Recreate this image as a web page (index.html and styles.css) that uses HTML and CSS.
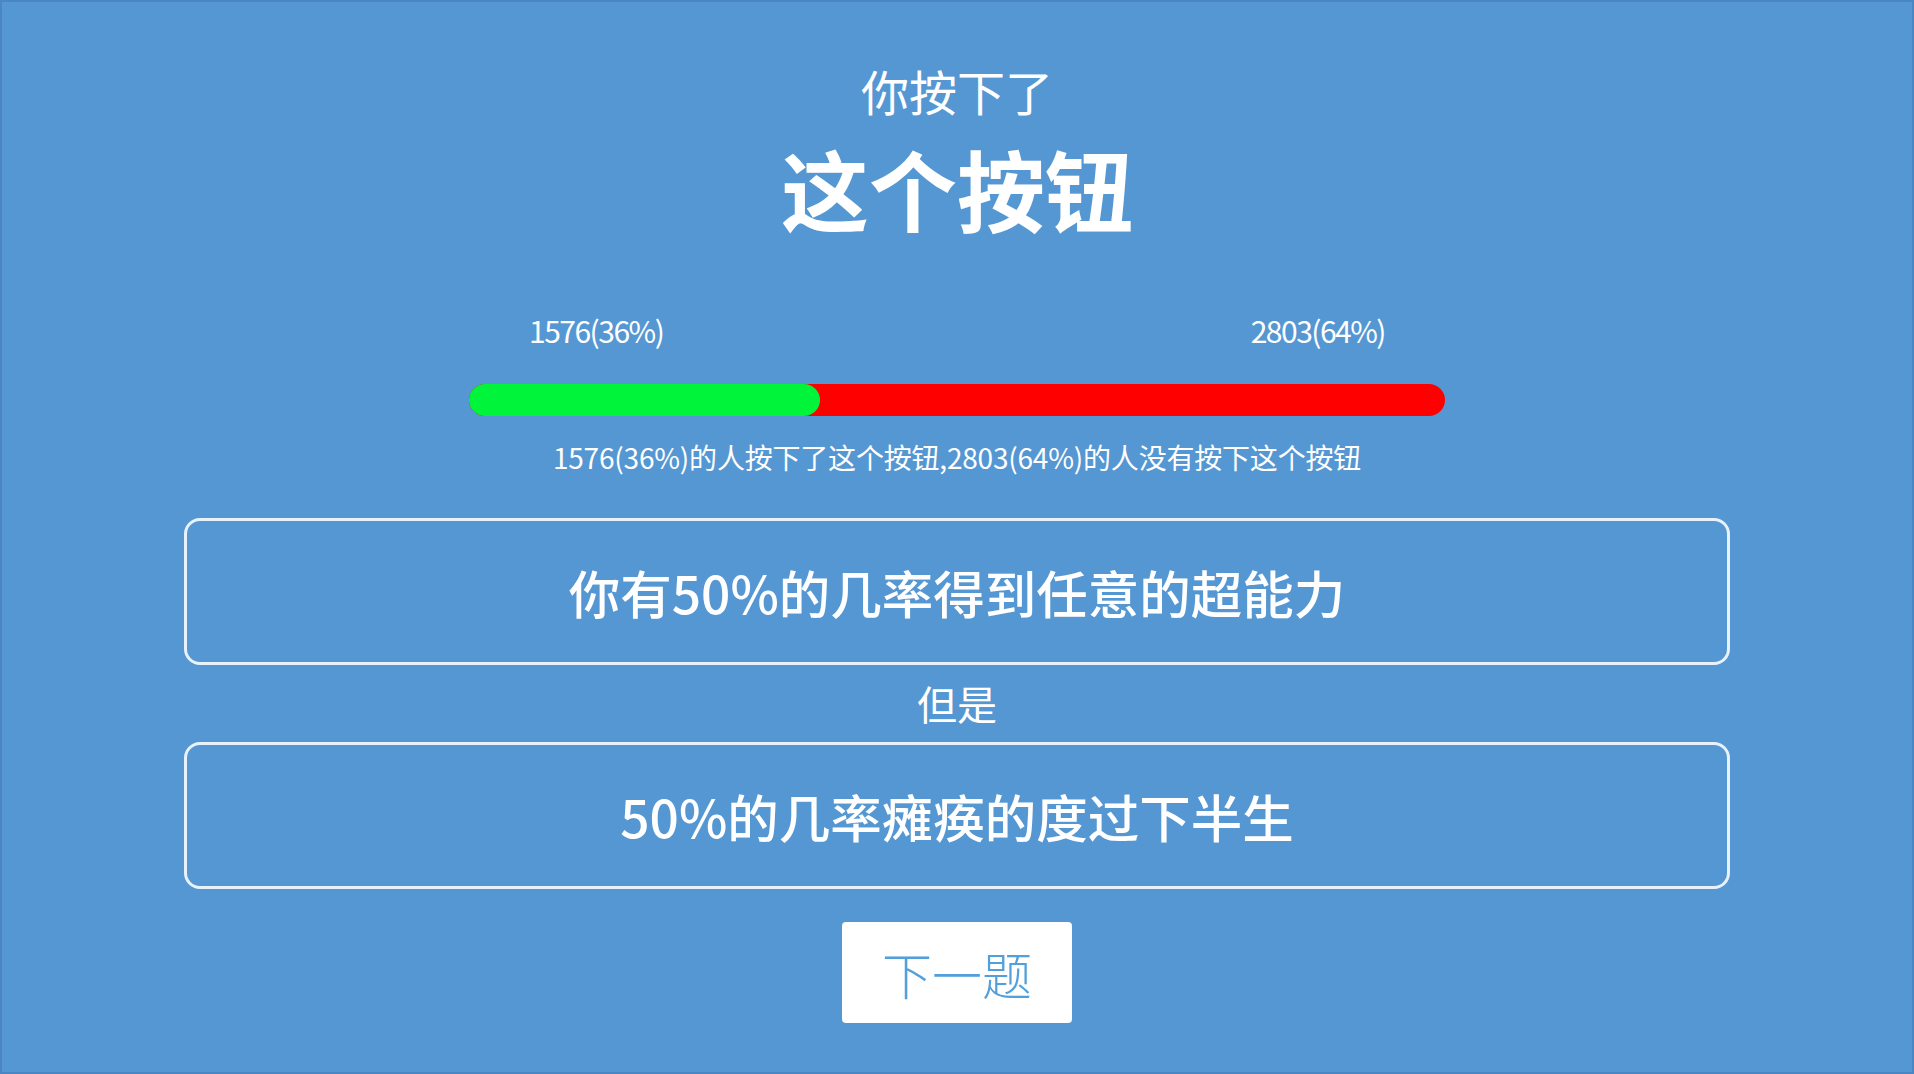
FILE: index.html
```html
<!DOCTYPE html>
<html lang="zh">
<head>
    <meta charset="UTF-8">
    <meta name="viewport" content="width=device-width, initial-scale=1.0">
    <title>按钮</title>
    <link rel="stylesheet" href="styles.css">
</head>
<body>
<div class="page">
    <div class="title-small">你按下了</div>
    <div class="title-big">这个按钮</div>

    <div class="vote-labels">
        <span>1576(36%)</span>
        <span>2803(64%)</span>
    </div>
    <div class="vote-bar">
        <div class="vote-yes" style="width: 36%"></div>
    </div>
    <div class="vote-summary">1576(36%)的人按下了这个按钮,2803(64%)的人没有按下这个按钮</div>

    <div class="option-box">你有50%的几率得到任意的超能力</div>
    <div class="but">但是</div>
    <div class="option-box second">50%的几率瘫痪的度过下半生</div>

    <button class="next-btn">下一题</button>
</div>
</body>
</html>
```

FILE: styles.css
```css
html, body {
    margin: 0;
    padding: 0;
}
body {
    font-family: "Noto Sans CJK SC", "Noto Sans", sans-serif;
    background-color: #5597d2;
    color: #fff;
}
.page {
    box-sizing: border-box;
    height: 100vh;
    border: 2px solid #4a86c4;
    display: flex;
    flex-direction: column;
    align-items: center;
    padding-top: 58px;
}
.title-small {
    font-size: 48px;
    line-height: 60px;
}
.title-big {
    margin-top: 17px;
    font-size: 88px;
    line-height: 100px;
    font-weight: bold;
}
.vote-labels {
    box-sizing: border-box;
    width: 976px;
    margin-top: 75px;
    padding: 0 60px;
    display: flex;
    justify-content: space-between;
    font-size: 30px;
    line-height: 36px;
    letter-spacing: -1.5px;
}
.vote-bar {
    width: 976px;
    height: 32px;
    margin-top: 36px;
    border-radius: 16px;
    background-color: #ff0000;
    display: flex;
}
.vote-yes {
    height: 100%;
    border-radius: 16px;
    background-color: #00f53a;
}
.vote-summary {
    margin-top: 23px;
    font-size: 28px;
    line-height: 36px;
    letter-spacing: -0.2px;
}
.option-box {
    box-sizing: border-box;
    width: 1546px;
    height: 147px;
    margin-top: 43px;
    border: 3px solid #e9f2fb;
    border-radius: 16px;
    display: flex;
    align-items: center;
    justify-content: center;
    font-size: 51.5px;
    font-weight: 500;
}
.option-box.second {
    margin-top: 16px;
}
.but {
    margin-top: 15px;
    font-size: 40px;
    line-height: 46px;
}
.next-btn {
    width: 230px;
    height: 101px;
    margin-top: 33px;
    border: none;
    border-radius: 4px;
    background-color: #fff;
    color: #52a0db;
    font-family: inherit;
    font-size: 50px;
    font-weight: 300;
    cursor: pointer;
}
```
